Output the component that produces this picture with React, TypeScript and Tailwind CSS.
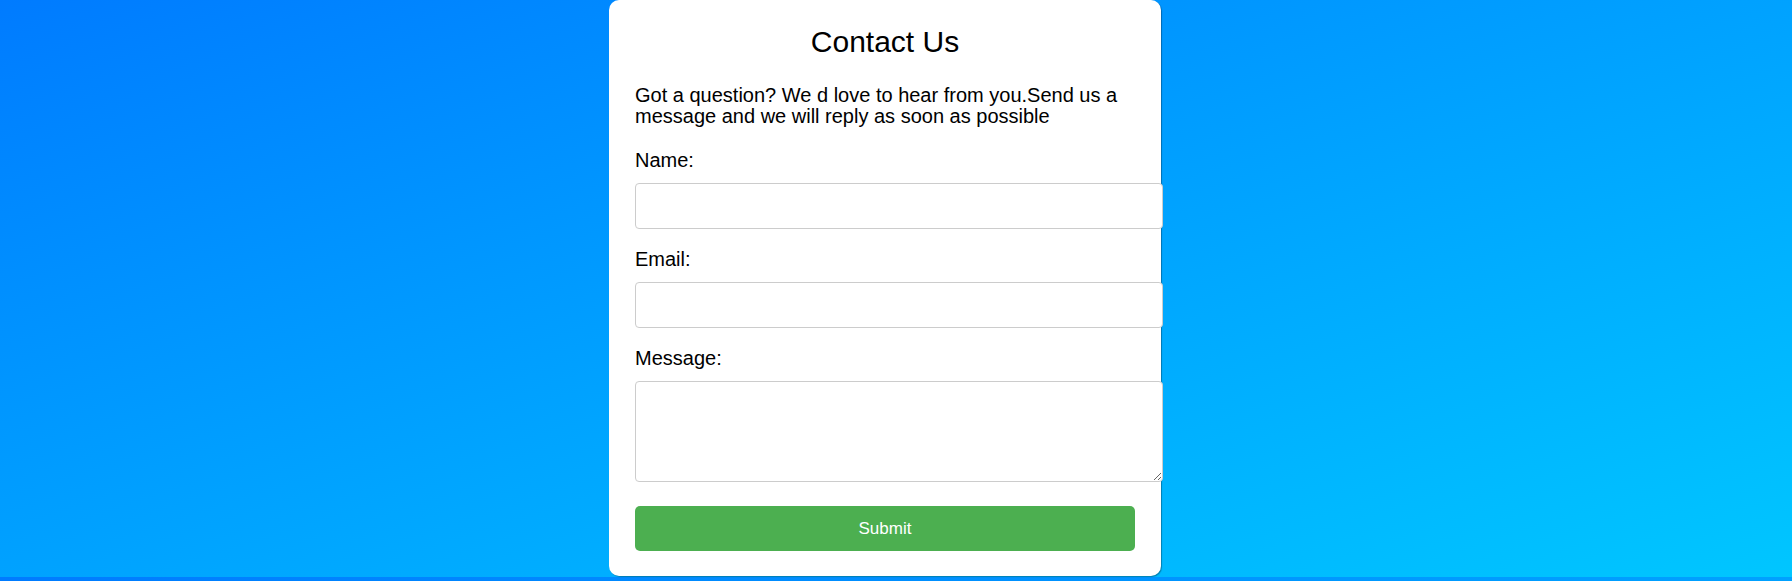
const fieldClass =
  "block w-[528px] border border-[#ccc] rounded-[4px] bg-white px-3 text-[16px] outline-none";

const App = () => {
  return (
    <div className="w-full font-['Liberation_Sans',Arial,sans-serif] text-black">
      {/* Page background */}
      <div className="h-[577px] bg-linear-to-br from-[#007bff] to-[#00c6ff] flex justify-center pr-[22px]">
        {/* Card */}
        <div className="w-[552px] h-[576px] bg-white rounded-[10px] pt-[25px] px-[26px] pb-[26px] shadow-[1px_1px_1px_rgba(0,0,0,0.3)]">
          <h2 className="text-[30px] leading-[33px] text-center mb-[27px]">Contact Us</h2>
          <p className="text-[20px] leading-[20.5px] mb-[24px]">
            Got a question? We d love to hear from you.Send us a message and we will reply as soon as possible
          </p>

          <form onSubmit={(e) => e.preventDefault()}>
            <label htmlFor="name" className="block text-[20px] leading-[21px] mb-[12px]">Name:</label>
            <input id="name" type="text" className={`${fieldClass} h-[46px] mb-[20px]`} />

            <label htmlFor="email" className="block text-[20px] leading-[21px] mb-[12px]">Email:</label>
            <input id="email" type="email" className={`${fieldClass} h-[46px] mb-[20px]`} />

            <label htmlFor="message" className="block text-[20px] leading-[21px] mb-[12px]">Message:</label>
            <textarea id="message" className={`${fieldClass} h-[101px] py-2 mb-[24px] resize`} />

            <button
              type="submit"
              className="block w-[500px] h-[45px] bg-[#4caf50] text-white text-[17px] rounded-[5px]"
            >
              Submit
            </button>
          </form>
        </div>
      </div>
      {/* repeated background tile strip */}
      <div className="h-[4px] bg-linear-to-r from-[#007bff] to-[#00a1ff]" />
    </div>
  );
};

export default App;
